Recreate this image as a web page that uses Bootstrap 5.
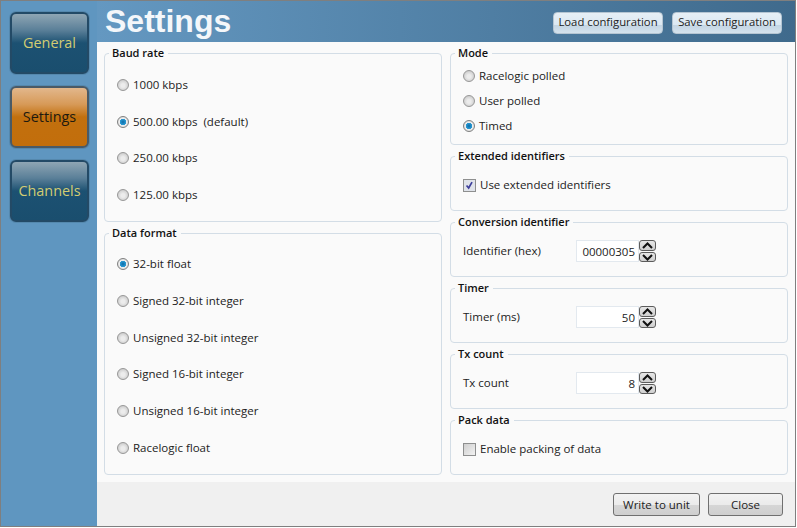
<!DOCTYPE html>
<html lang="en">
<head>
    <meta charset="UTF-8">
    <title>Settings</title>
    <meta name="viewport" content="width=device-width, initial-scale=1">
    <link href="https://cdn.jsdelivr.net/npm/bootstrap@5.3.2/dist/css/bootstrap.min.css" rel="stylesheet">
    <style>
        html, body { background: #fff; }
        body {
            font-family: "Open Sans", "Liberation Sans", sans-serif;
            font-size: 11.5px;
            color: #222;
        }
        .app-window {
            width: 796px;
            height: 527px;
            border: 1px solid #7f7f7f;
            border-right-width: 2px;
            background: #5f96c0;
        }
        .side { width: 96px; padding: 11px 0 0 9px; gap: 12px; }
        .side-btn {
            width: 79px;
            height: 62px;
            padding: 0 0 1px;
            border: 2px solid #234a66;
            border-radius: 6px;
            font-size: 14.4px;
            color: #d3cc72;
            background: linear-gradient(#8fa6b4 0%, #5a7f98 28%, #1c5172 50%, #1a4e6e 100%);
            box-shadow: 0 0 0 1px #5588ad;
        }
        .side-btn.active {
            color: #1d1a10;
            border-color: #4a5a66;
            background: linear-gradient(#e2b78c 0%, #d79a58 28%, #c2700e 50%, #c26e0c 100%);
        }
        .top-bar {
            height: 41px;
            padding: 0 13px 0 8px;
            background: linear-gradient(90deg, #6498c1, #3f6a8c);
        }
        .top-bar h1 {
            font-family: "Liberation Sans", Arial, sans-serif;
            font-size: 32px;
            font-weight: 700;
            color: #f4f7fa;
            margin: 0;
        }
        .cfg-btns { gap: 9px; padding-top: 2px; }
        .cfg-btn {
            width: 110px;
            height: 22px;
            padding: 0;
            font-size: 11.3px;
            color: #222;
            border: 1px solid #b5c5d2;
            border-radius: 4px;
            background: linear-gradient(#e6eff6 0%, #dbe8f2 60%, #c4d6e4 62%, #d4e2ed 100%);
        }
        .settings-body {
            height: 440px;
            padding: 3px 7px 0 7px;
            gap: 8px;
            background: #fafafa;
        }
        .settings-col { width: 338px; gap: 3px; }
        .grp {
            border: 1px solid #d3dde6;
            border-radius: 4px;
            padding: 0 9px 0 12px;
            margin: 0;
            min-width: 0;
        }
        .grp legend {
            float: none;
            width: auto;
            font-size: 11px;
            line-height: 16px;
            font-weight: 600;
            color: #111;
            margin: 0 0 0 -8px;
            padding: 0 4px 0 3px;
        }
        .grp-baud { height: 177px; }
        .grp-format { height: 250px; }
        .grp-mode { height: 100px; }
        .grp-small { height: 63px; }
        .opt-list { display: grid; }
        .grp-baud .opt-list { grid-auto-rows: 36.5px; padding-top: 6px; }
        .grp-format .opt-list { grid-auto-rows: 36.7px; padding-top: 5px; }
        .grp-mode .opt-list { grid-auto-rows: 25px; padding-top: 2px; }
        .opt {
            margin: 0;
            padding: 0;
            min-height: 0;
            gap: 4px;
        }
        .opt .form-check-input {
            float: none;
            flex: none;
            margin: 0;
            width: 12px;
            height: 12px;
            border: 1px solid #979797;
            background: radial-gradient(circle at 50% 55%, #ececec 25%, #bdbdbd 100%);
        }
        .opt .form-check-input:checked {
            background: radial-gradient(circle, #0c6ba6 0%, #2a9ad4 42%, #eeeeee 50%, #c9c9c9 100%);
            border-color: #7f8080;
        }
        .opt .form-check-label { line-height: 16px; }
        .check-row { padding: 13px 0 0; gap: 4px; }
        .check-row .form-check-input {
            border-radius: 0;
            width: 13px;
            height: 13px;
            border-color: #8e8f8f;
            background: linear-gradient(135deg, #cfcfcf, #f2f2f2);
        }
        .check-row .form-check-input:checked {
            background: #dfe3ea url("data:image/svg+xml,%3Csvg xmlns='http://www.w3.org/2000/svg' viewBox='0 0 13 13'%3E%3Cpath d='M3 6.5l2.5 3L9.5 2.5' fill='none' stroke='%233d3f9c' stroke-width='2'/%3E%3C/svg%3E") center/100% no-repeat;
            border-color: #8e8f8f;
        }
        .spin-row { padding-top: 10px; }
        .spin-row label { width: 113px; margin: 0; }
        .spin-row .form-control {
            width: 63px;
            height: 22px;
            padding: 0 3px 0 0;
            border: 1px solid #e3e9ef;
            border-radius: 0;
            font-size: 11.5px;
            color: #222;
            text-align: right;
        }
        .spin-btns { width: 17px; height: 22px; gap: 1px; }
        .spin-btns button {
            height: 10.5px;
            padding: 0;
            border: 1px solid #5c5c5c;
            border-radius: 3px;
            background: linear-gradient(#e6e6e6, #cfcfcf);
            line-height: 0;
        }
        .spin-btns svg { display: block; margin: 0 auto; }
        .foot {
            height: 44px;
            padding: 11px 12px 0 0;
            gap: 8px;
            background: #f0f0f0;
        }
        .foot .btn {
            height: 23px;
            padding: 0;
            font-size: 11.5px;
            color: #222;
            border: 1px solid #707070;
            border-radius: 3px;
            background: linear-gradient(#f3f3f3 0%, #ebebeb 50%, #d6d6d6 52%, #cfcfcf 100%);
        }
        .btn-write { width: 87px; }
        .btn-close-win { width: 75px; }
    </style>
</head>
<body>

<div class="app-window d-flex">
    <div class="side d-flex flex-column flex-shrink-0">
        <button class="btn side-btn">General</button>
        <button class="btn side-btn active">Settings</button>
        <button class="btn side-btn">Channels</button>
    </div>

    <div class="flex-grow-1 d-flex flex-column">
        <div class="top-bar d-flex align-items-center">
            <h1 class="me-auto">Settings</h1>
            <div class="cfg-btns d-flex">
                <button class="btn cfg-btn">Load configuration</button>
                <button class="btn cfg-btn">Save configuration</button>
            </div>
        </div>

        <div class="settings-body d-flex">
            <div class="settings-col d-flex flex-column">
                <fieldset class="grp grp-baud">
                    <legend>Baud rate</legend>
                    <div class="opt-list">
                        <div class="form-check opt d-flex align-items-center"><input class="form-check-input" type="radio" name="baud" id="b1"><label class="form-check-label" for="b1">1000 kbps</label></div>
                        <div class="form-check opt d-flex align-items-center"><input class="form-check-input" type="radio" name="baud" id="b2" checked><label class="form-check-label" for="b2">500.00 kbps &nbsp;(default)</label></div>
                        <div class="form-check opt d-flex align-items-center"><input class="form-check-input" type="radio" name="baud" id="b3"><label class="form-check-label" for="b3">250.00 kbps</label></div>
                        <div class="form-check opt d-flex align-items-center"><input class="form-check-input" type="radio" name="baud" id="b4"><label class="form-check-label" for="b4">125.00 kbps</label></div>
                    </div>
                </fieldset>
                <fieldset class="grp grp-format">
                    <legend>Data format</legend>
                    <div class="opt-list">
                        <div class="form-check opt d-flex align-items-center"><input class="form-check-input" type="radio" name="fmt" id="f1" checked><label class="form-check-label" for="f1">32-bit float</label></div>
                        <div class="form-check opt d-flex align-items-center"><input class="form-check-input" type="radio" name="fmt" id="f2"><label class="form-check-label" for="f2">Signed 32-bit integer</label></div>
                        <div class="form-check opt d-flex align-items-center"><input class="form-check-input" type="radio" name="fmt" id="f3"><label class="form-check-label" for="f3">Unsigned 32-bit integer</label></div>
                        <div class="form-check opt d-flex align-items-center"><input class="form-check-input" type="radio" name="fmt" id="f4"><label class="form-check-label" for="f4">Signed 16-bit integer</label></div>
                        <div class="form-check opt d-flex align-items-center"><input class="form-check-input" type="radio" name="fmt" id="f5"><label class="form-check-label" for="f5">Unsigned 16-bit integer</label></div>
                        <div class="form-check opt d-flex align-items-center"><input class="form-check-input" type="radio" name="fmt" id="f6"><label class="form-check-label" for="f6">Racelogic float</label></div>
                    </div>
                </fieldset>
            </div>

            <div class="settings-col d-flex flex-column">
                <fieldset class="grp grp-mode">
                    <legend>Mode</legend>
                    <div class="opt-list">
                        <div class="form-check opt d-flex align-items-center"><input class="form-check-input" type="radio" name="mode" id="m1"><label class="form-check-label" for="m1">Racelogic polled</label></div>
                        <div class="form-check opt d-flex align-items-center"><input class="form-check-input" type="radio" name="mode" id="m2"><label class="form-check-label" for="m2">User polled</label></div>
                        <div class="form-check opt d-flex align-items-center"><input class="form-check-input" type="radio" name="mode" id="m3" checked><label class="form-check-label" for="m3">Timed</label></div>
                    </div>
                </fieldset>
                <fieldset class="grp grp-small">
                    <legend>Extended identifiers</legend>
                    <div class="form-check opt check-row d-flex align-items-center"><input class="form-check-input" type="checkbox" id="c1" checked><label class="form-check-label" for="c1">Use extended identifiers</label></div>
                </fieldset>
                <fieldset class="grp grp-small">
                    <legend>Conversion identifier</legend>
                    <div class="spin-row d-flex align-items-center">
                        <label for="s1">Identifier (hex)</label>
                        <input class="form-control" id="s1" value="00000305">
                        <div class="spin-btns d-flex flex-column">
                            <button><svg width="13" height="9" viewBox="0 0 13 9"><path d="M2 7L6.5 2.5 11 7" fill="none" stroke="#111" stroke-width="2"/></svg></button>
                            <button><svg width="13" height="9" viewBox="0 0 13 9"><path d="M2 2L6.5 6.5 11 2" fill="none" stroke="#111" stroke-width="2"/></svg></button>
                        </div>
                    </div>
                </fieldset>
                <fieldset class="grp grp-small">
                    <legend>Timer</legend>
                    <div class="spin-row d-flex align-items-center">
                        <label for="s2">Timer (ms)</label>
                        <input class="form-control" id="s2" value="50">
                        <div class="spin-btns d-flex flex-column">
                            <button><svg width="13" height="9" viewBox="0 0 13 9"><path d="M2 7L6.5 2.5 11 7" fill="none" stroke="#111" stroke-width="2"/></svg></button>
                            <button><svg width="13" height="9" viewBox="0 0 13 9"><path d="M2 2L6.5 6.5 11 2" fill="none" stroke="#111" stroke-width="2"/></svg></button>
                        </div>
                    </div>
                </fieldset>
                <fieldset class="grp grp-small">
                    <legend>Tx count</legend>
                    <div class="spin-row d-flex align-items-center">
                        <label for="s3">Tx count</label>
                        <input class="form-control" id="s3" value="8">
                        <div class="spin-btns d-flex flex-column">
                            <button><svg width="13" height="9" viewBox="0 0 13 9"><path d="M2 7L6.5 2.5 11 7" fill="none" stroke="#111" stroke-width="2"/></svg></button>
                            <button><svg width="13" height="9" viewBox="0 0 13 9"><path d="M2 2L6.5 6.5 11 2" fill="none" stroke="#111" stroke-width="2"/></svg></button>
                        </div>
                    </div>
                </fieldset>
                <fieldset class="grp grp-small">
                    <legend>Pack data</legend>
                    <div class="form-check opt check-row d-flex align-items-center"><input class="form-check-input" type="checkbox" id="c2"><label class="form-check-label" for="c2">Enable packing of data</label></div>
                </fieldset>
            </div>
        </div>

        <div class="foot d-flex justify-content-end">
            <button class="btn btn-write">Write to unit</button>
            <button class="btn btn-close-win">Close</button>
        </div>
    </div>
</div>

<script src="https://cdn.jsdelivr.net/npm/bootstrap@5.3.2/dist/js/bootstrap.bundle.min.js"></script>
</body>
</html>
